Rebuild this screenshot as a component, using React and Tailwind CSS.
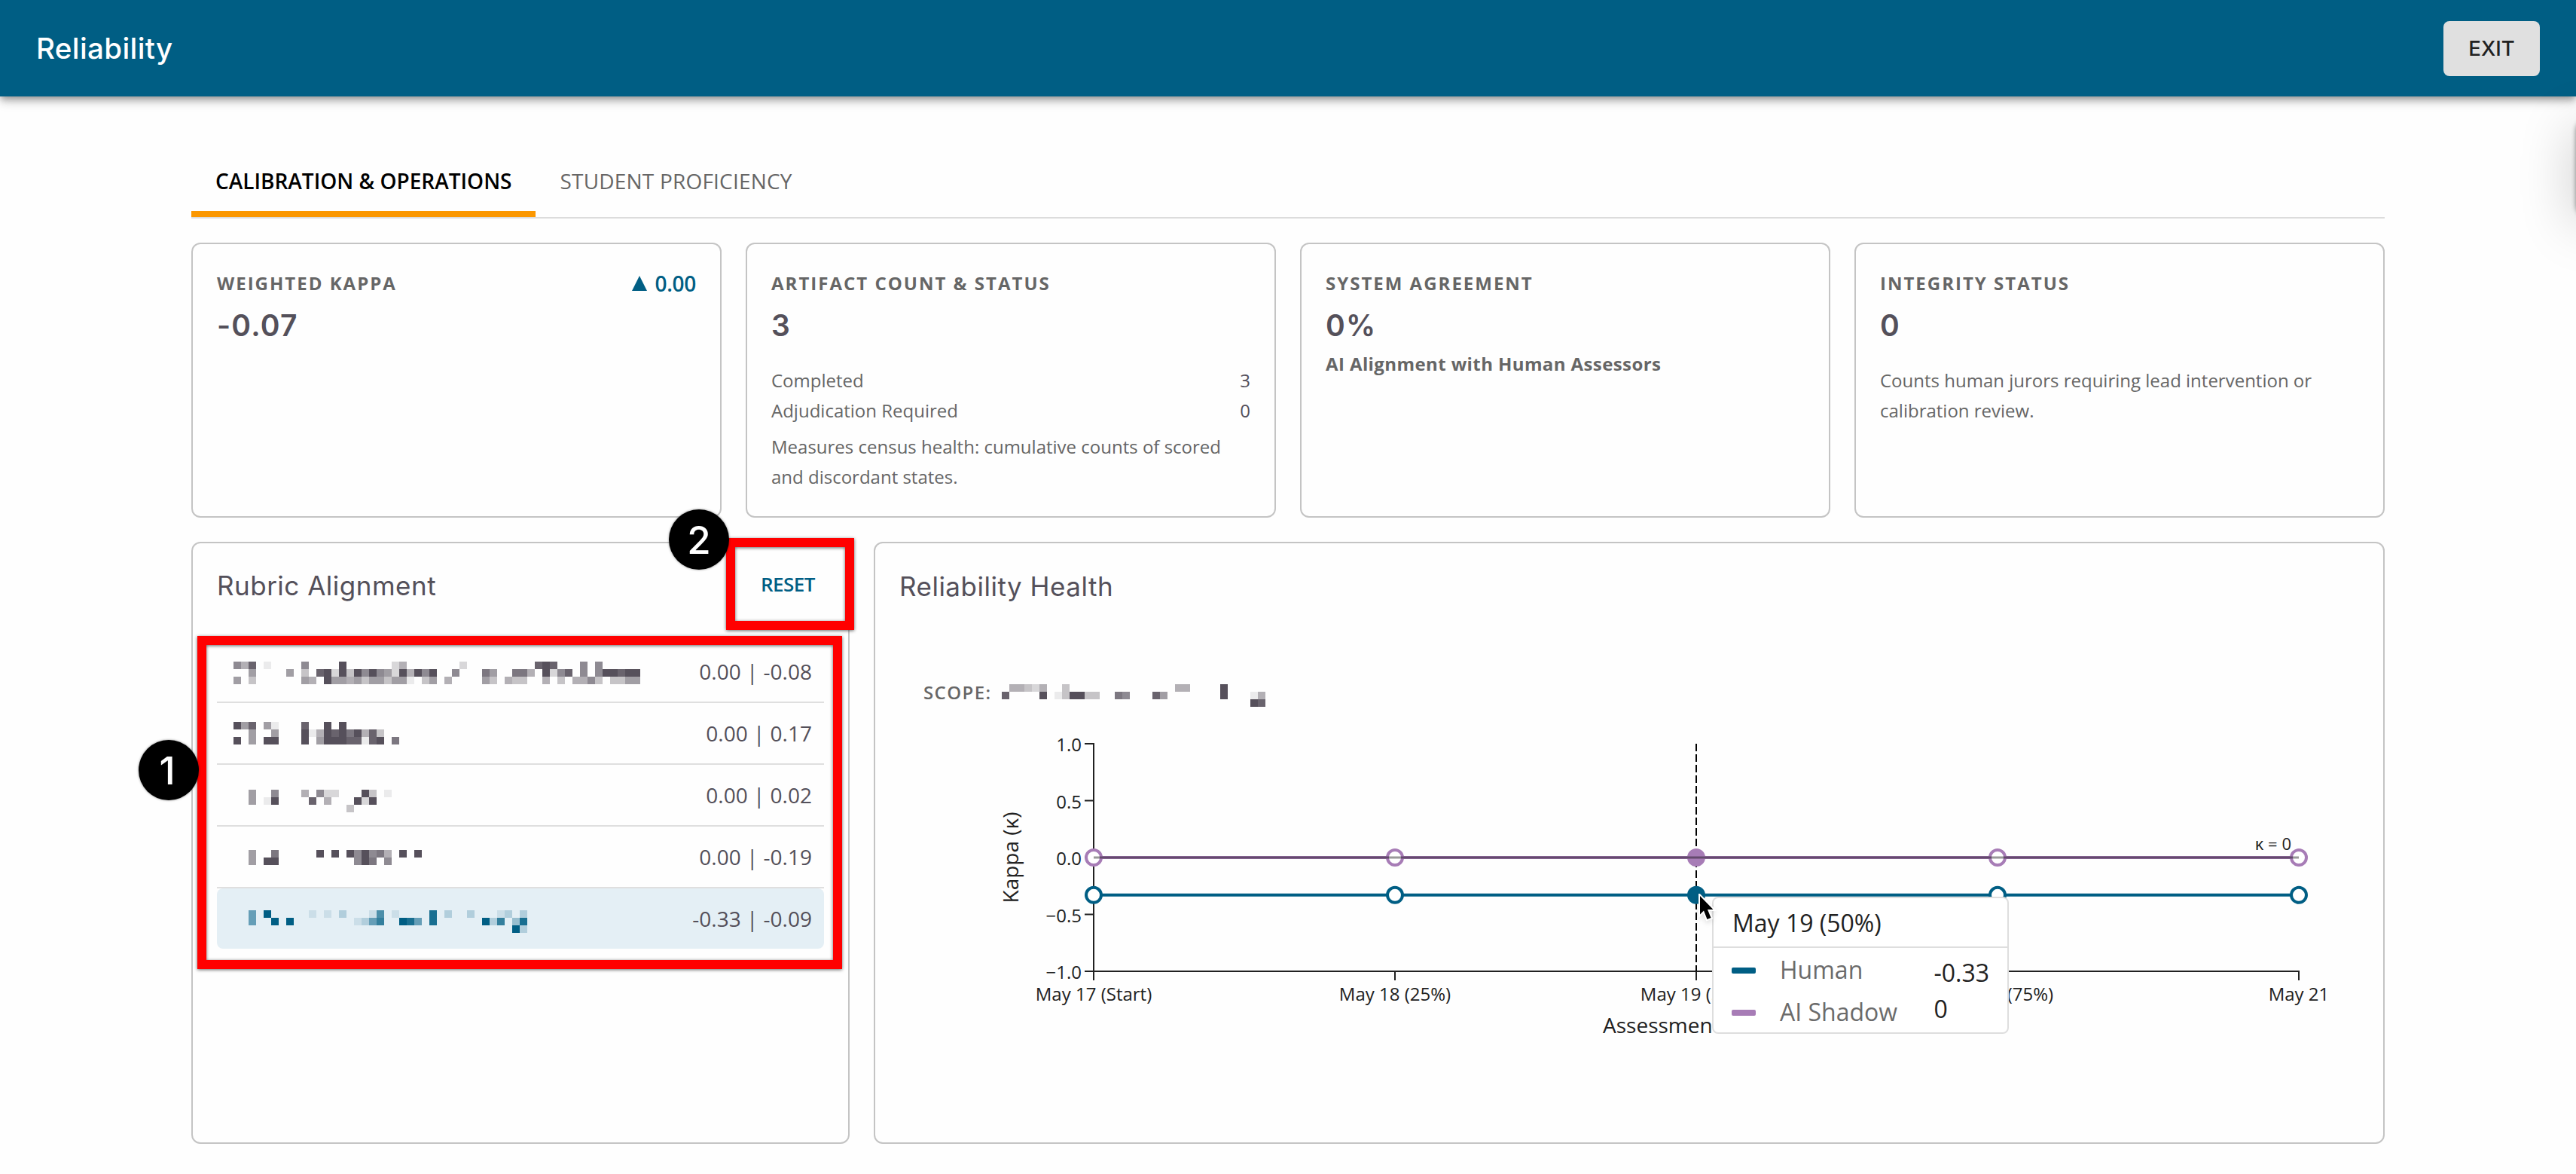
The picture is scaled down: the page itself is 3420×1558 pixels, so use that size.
import { useState } from "react";

const tabs = ["Calibration & Operations", "Student Proficiency"];

// Redacted names: one digit per 10px cell, 9 is the full colour
const rubrics = [
  {
    id: 1,
    top: 27,
    cells: [
      "648.1....6....9......24.......2.........898...6.6.",
      "..5....5.3.8929396965294969..6...75..774.9268.6.699899",
      "5.3......54.955453553551.35.4....53.433..4.3.4463.3355",
    ],
    score: "0.00 | -0.08",
  },
  {
    id: 2,
    top: 25,
    cells: ["958.51...8..9.9", "..5..5...91498979483", "9.5.99...9.599988189.7"],
    score: "0.00 | 0.17",
  },
  {
    id: 3,
    top: 33,
    cells: ["..5..6...4.622...93.1", "..5.19....8.4...929.", "...............3"],
    score: "0.00 | 0.02",
  },
  {
    id: 4,
    top: 31,
    cells: ["..5..7.....9.9.969674.9.9", "..5.99..........697.6"],
    score: "0.00 | -0.19",
  },
  {
    id: 5,
    top: 29,
    cells: [
      "..5.9.....1.1.2...16.1....8.2..2...12.2",
      "..5..9.9........1257..985.8......927.38",
      ".....................................92",
    ],
    score: "-0.33 | -0.09",
  },
];

const scopeCells = [
  ".44324..3..............44....9",
  "8....9.139933..76...85.......9...14",
  ".................................98",
];

const days = ["May 17 (Start)", "May 18 (25%)", "May 19 (50%)", "May 20 (75%)", "May 21"];
const yTicks = [
  { value: 1, label: "1.0" },
  { value: 0.5, label: "0.5" },
  { value: 0, label: "0.0" },
  { value: -0.5, label: "−0.5" },
  { value: -1, label: "−1.0" },
];
const series = [
  { name: "Human", color: "#005e84", value: -0.33 },
  { name: "AI Shadow", color: "#a77cb6", value: 0 },
];

const xAt = (i) => 226 + i * 400;
const yAt = (v) => 178 - v * 151;

function Redacted({ cells, color }) {
  const width = Math.max(...cells.map((line) => line.length)) * 10;
  return (
    <svg width={width} height={cells.length * 10} fill={color} shapeRendering="crispEdges" className="block shrink-0">
      {cells.map((line, y) =>
        line.split("").map((c, x) =>
          c === "." ? null : (
            <rect key={`${x}-${y}`} x={x * 10} y={y * 10} width="10" height="10" opacity={Number(c) / 9} />
          )
        )
      )}
    </svg>
  );
}

function StatCard({ label, value, trend, children }) {
  return (
    <div className="h-[365px] flex-1 rounded-xl border-2 border-[#c4c4c4] p-8">
      <div className="flex h-10 items-center justify-between">
        <span className="text-2xl font-bold uppercase tracking-[2px] text-[#666]">{label}</span>
        {trend && (
          <span className="flex items-center gap-[11px] text-[28px] font-semibold leading-10 tracking-[-0.3px] text-[#005e84]">
            <svg width="20" height="20" viewBox="0 0 20 20" fill="currentColor">
              <path d="M10 0L20 20H0z" />
            </svg>
            {trend}
          </span>
        )}
      </div>
      <div className="h-[67px] pt-[11px] font-['Inter',sans-serif] text-[39px] font-semibold leading-[50px] tracking-[1.2px] text-[#54505a]">
        {value}
      </div>
      {children}
    </div>
  );
}

function Chart() {
  return (
    <div className="relative">
      <svg width="1906" height="430" viewBox="0 0 1906 430" className="block" fill="#212121">
        {/* axes */}
        <g stroke="#212121" strokeWidth="2">
          <path d="M226 26V330M225 329H1827" fill="none" />
          {yTicks.map((t) => (
            <path key={t.label} d={`M214 ${yAt(t.value)}H226`} />
          ))}
          {days.map((d, i) => (
            <path key={d} d={`M${xAt(i)} 329V341`} />
          ))}
        </g>
        <g fontSize="24">
          {yTicks.map((t) => (
            <text key={t.label} x="210" y={yAt(t.value) + 10} textAnchor="end">
              {t.label}
            </text>
          ))}
          {days.map((d, i) => (
            <text key={d} x={xAt(i)} y="368" textAnchor="middle">
              {d}
            </text>
          ))}
        </g>
        <text fontSize="28" textAnchor="middle" transform="translate(126 178) rotate(-90)">
          Kappa (κ)
        </text>
        <text x="1026" y="411" fontSize="28" textAnchor="middle">
          Assessment Period
        </text>

        {/* hovered day */}
        <path d="M1026 27V329" stroke="#000" strokeWidth="2" strokeDasharray="10 4" />

        {series.map((s) => (
          <g key={s.name} stroke={s.color} strokeWidth="4">
            <path d={`M226 ${yAt(s.value)}H1826`} />
            {days.map((d, i) => (
              <circle key={d} cx={xAt(i)} cy={yAt(s.value)} r="10" fill={i === 2 ? s.color : "#fff"} />
            ))}
          </g>
        ))}
        <path d="M226 178H1826" stroke="#000" strokeOpacity="0.4" strokeWidth="3" />
        <text x="1816" y="168" fontSize="22" textAnchor="end">
          κ = 0
        </text>
      </svg>

      {/* tooltip */}
      <div className="absolute left-[1047px] top-[230px] h-[182px] w-[394px] rounded-lg border-2 border-[#dedede] bg-white text-[32px] text-[#212121]">
        <div className="h-[66px] border-b-2 border-[#dedede] pl-[25px] leading-[66px]">May 19 (50%)</div>
        <div className="flex justify-between pl-6 pr-6">
          <div className="pt-0.5 text-[#6b6b6b]">
            {series.map((s) => (
              <div key={s.name} className="flex h-14 items-center gap-8">
                <span className="h-2 w-8 rounded-xs" style={{ background: s.color }} />
                <span className="pb-[3px]">{s.name}</span>
              </div>
            ))}
          </div>
          <div className="pt-[9px] font-medium leading-12">
            {series.map((s) => (
              <div key={s.name}>{s.value}</div>
            ))}
          </div>
        </div>
      </div>

      <svg width="28" height="40" viewBox="0 0 28 40" className="absolute left-[1028px] top-[226px] drop-shadow-md">
        <path
          d="M3 3V27.5L8 22.5L12.5 34L17.5 32L13 21H20.5Z"
          fill="#000"
          stroke="#fff"
          strokeWidth="4"
          paintOrder="stroke"
        />
      </svg>
    </div>
  );
}

export default function App() {
  const [activeTab, setActiveTab] = useState(0);
  const [selected, setSelected] = useState(5);

  return (
    <div className="relative h-[1558px] w-[3420px] overflow-hidden bg-[#fefefe] font-['Open_Sans','Noto_Sans',sans-serif]">
      <header className="relative flex h-32 items-center justify-between bg-[#005e84] pl-12 pr-12 font-['Inter',sans-serif] shadow-[0_4px_8px_-2px_rgba(0,0,0,0.3),0_8px_10px_rgba(0,0,0,0.14),0_2px_20px_rgba(0,0,0,0.12)]">
        <h1 className="pt-0.5 text-[38.5px] font-medium tracking-[0.4px] text-white">Reliability</h1>
        <button className="h-[73px] w-32 rounded-lg bg-[#e0e0e0] pt-0.5 text-[27.5px] font-medium text-[#212121]">EXIT</button>
      </header>

      {/* closed side drawer, only its shadow reaches the page */}
      <div className="absolute -right-10 top-[158px] h-[130px] w-10 rounded-2xl bg-white shadow-[0_0_6px_rgba(0,0,0,0.45),0_10px_70px_rgba(0,0,0,0.25)]" />

      <main className="px-[254px] pt-16">
        <div className="flex border-b-2 border-[#dcdcdc]">
          {tabs.map((tab, i) => (
            <button
              key={tab}
              onClick={() => setActiveTab(i)}
              className={
                activeTab === i
                  ? "h-24 border-b-8 border-[#fb9700] px-8 pt-2 text-[28px] font-semibold uppercase text-black"
                  : "h-24 px-8 text-[28px] uppercase tracking-[0.2px] text-[#666]"
              }
            >
              {tab}
            </button>
          ))}
        </div>

        <div className="mt-8 flex gap-8">
          <StatCard label="Weighted Kappa" value="-0.07" trend="0.00" />
          <StatCard label="Artifact Count & Status" value="3">
            <div className="mt-[22px] text-2xl leading-10 text-[#666]">
              <div className="flex justify-between">
                <span>Completed</span>
                <span className="text-[#54505a]">3</span>
              </div>
              <div className="flex justify-between">
                <span>Adjudication Required</span>
                <span className="text-[#54505a]">0</span>
              </div>
              <p className="mt-2">Measures census health: cumulative counts of scored and discordant states.</p>
            </div>
          </StatCard>
          <StatCard label="System Agreement" value="0%">
            <p className="text-2xl font-bold leading-10 tracking-[0.4px] text-[#666]">
              AI Alignment with Human Assessors
            </p>
          </StatCard>
          <StatCard label="Integrity Status" value="0">
            <p className="mt-[22px] text-2xl leading-10 text-[#666]">
              Counts human jurors requiring lead intervention or calibration review.
            </p>
          </StatCard>
        </div>

        <div className="mt-8 flex gap-8">
          <section className="h-[799px] w-[874px] rounded-xl border-2 border-[#c4c4c4] p-8">
            <div className="mb-[52px] flex h-[46px] items-center justify-between">
              <h2 className="pt-0.5 font-['Inter',sans-serif] text-[35px] tracking-[0.5px] text-[#54505a]">
                Rubric Alignment
              </h2>
              <button
                className="px-3 pb-0.5 text-[26px] font-semibold tracking-[-0.5px] text-[#005e84]"
                onClick={() => setSelected(null)}
              >
                RESET
              </button>
            </div>
            {rubrics.map((r) => (
              <div
                key={r.id}
                onClick={() => setSelected(r.id)}
                className={
                  selected === r.id
                    ? "flex h-20 justify-between rounded-lg bg-[#e4eff5] pl-[22px] pr-4"
                    : "flex h-[82px] justify-between border-b-2 border-[#dfdfdf] pl-[22px] pr-4"
                }
              >
                <div style={{ paddingTop: r.top }}>
                  <Redacted cells={r.cells} color={selected === r.id ? "#005e84" : "#56505b"} />
                </div>
                <span className="text-[28px] leading-20 text-[#54505a]">{r.score}</span>
              </div>
            ))}
          </section>

          <section className="h-[799px] flex-1 rounded-xl border-2 border-[#c4c4c4] p-8">
            <h2 className="h-[46px] pt-0.5 font-['Inter',sans-serif] text-[35px] leading-[46px] tracking-[0.5px] text-[#54505a]">
              Reliability Health
            </h2>
            <div className="pl-8">
              <div className="mt-[100px] flex h-[61px]">
                <span className="w-[104px] text-2xl font-semibold leading-10 tracking-[1.4px] text-[#666]">SCOPE:</span>
                <div className="pt-[9px]">
                  <Redacted cells={scopeCells} color="#56505b" />
                </div>
              </div>
              <Chart />
            </div>
          </section>
        </div>
      </main>

      {/* walkthrough callouts */}
      <div className="absolute left-[262px] top-[844px] h-[442px] w-[856px] border-12 border-[#ff0000] drop-shadow-[0_1px_2px_rgba(0,0,0,0.6)]" />
      <div className="absolute left-[964px] top-[714px] h-[122px] w-[170px] border-12 border-[#ff0000] drop-shadow-[0_1px_2px_rgba(0,0,0,0.6)]" />
      <div className="absolute left-[184px] top-[982px] flex size-20 items-center justify-center rounded-full bg-black pr-1 font-['Inter',sans-serif] text-[51px] font-medium leading-none text-white shadow-[0_0_3px_rgba(0,0,0,0.5)]">
        1
      </div>
      <div className="absolute left-[888px] top-[676px] flex size-20 items-center justify-center rounded-full bg-black font-['Inter',sans-serif] text-[51px] font-medium leading-none text-white shadow-[0_0_3px_rgba(0,0,0,0.5)]">
        2
      </div>
    </div>
  );
}
